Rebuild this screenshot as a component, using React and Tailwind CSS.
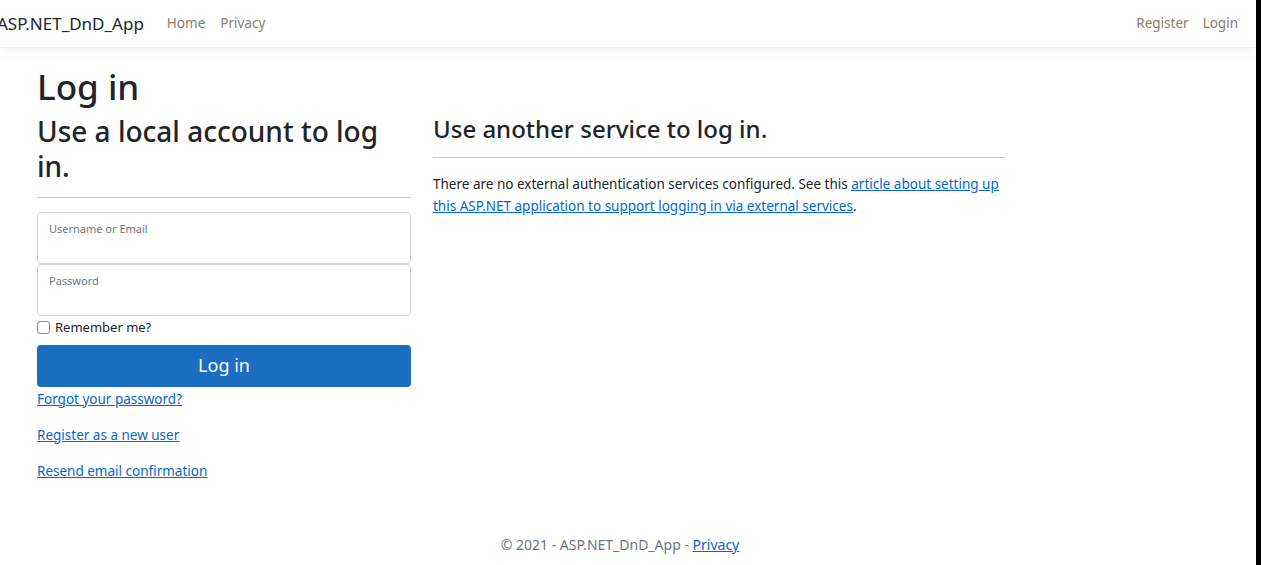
export default function App() {
  const font = { fontFamily: '"Noto Sans", "Open Sans", sans-serif' };
  return (
    <div className="flex h-[565px] w-[1261px] overflow-hidden bg-black" style={font}>
      <div className="flex w-[1256px] flex-col bg-white text-[#212529]">
        <header className="relative z-10 flex h-[48px] shrink-0 items-center justify-between border-b border-[#f0f0f0] bg-white shadow-[0_4px_12px_rgba(0,0,0,0.05)]">
          <div className="flex items-center">
            <span className="ml-[-3px] text-[17px] text-[#212529]">ASP.NET_DnD_App</span>
            <nav className="ml-[23px] flex gap-[15px] text-[13.5px] text-[#86806f]">
              <a>Home</a>
              <a>Privacy</a>
            </nav>
          </div>
          <nav className="mr-[18px] flex gap-[14px] text-[13.5px] text-[#86806f]">
            <a>Register</a>
            <a>Login</a>
          </nav>
        </header>

        <main className="flex flex-1 flex-col pl-[37px]">
          <h1 className="mt-[17px] text-[35px] font-medium leading-[44px]">Log in</h1>
          <div className="mt-[5px] flex gap-[22px]">
            <section className="w-[374px]">
              <h2 className="text-[28px] font-medium leading-[35px]">Use a local account to log in.</h2>
              <hr className="mt-[13px] border-[#c8c8c8]" />
              <form className="mt-[14px]">
                <div className="h-[52px] rounded-[4px] border border-[#ced4da] px-[11px] pt-[8px] text-[11px] text-[#6c757d]">
                  Username or Email
                </div>
                <div className="h-[52px] rounded-[4px] border border-[#ced4da] px-[11px] pt-[8px] text-[11px] text-[#6c757d]">
                  Password
                </div>
                <label className="mt-[2px] flex items-center gap-[5px] text-[13px]">
                  <span className="h-[13px] w-[13px] rounded-[3px] border border-[#888]" />
                  Remember me?
                </label>
                <button
                  type="button"
                  className="mt-[7px] h-[42px] w-full rounded-[4px] bg-[#1b6ec2] text-[18px] text-white"
                >
                  Log in
                </button>
              </form>
              <div className="mt-[1px] flex flex-col gap-[14px] text-[13.5px] leading-[22px] text-[#0366d6] underline">
                <a>Forgot your password?</a>
                <a>Register as a new user</a>
                <a>Resend email confirmation</a>
              </div>
            </section>
            <section className="w-[572px]">
              <h3 className="text-[24px] font-medium leading-[30px]">Use another service to log in.</h3>
              <hr className="mt-[13px] border-[#c8c8c8]" />
              <p className="mt-[15px] text-[13.5px] leading-[22px]">
                There are no external authentication services configured. See this{" "}
                <a className="text-[#0366d6] underline">
                  article about setting up this ASP.NET application to support logging in via external services
                </a>
                .
              </p>
            </section>
          </div>
        </main>

        <footer className="pb-[10px] pr-[16px] text-center text-[14px] text-[#6c757d]">
          © 2021 - ASP.NET_DnD_App - <a className="text-[#0366d6] underline">Privacy</a>
        </footer>
      </div>
      <div className="w-[5px] bg-black" />
    </div>
  );
}
